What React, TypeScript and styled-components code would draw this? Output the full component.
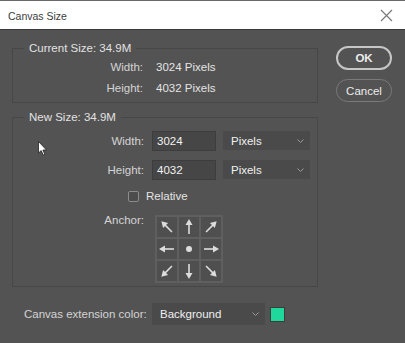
import React from 'react'
import styled, { createGlobalStyle } from 'styled-components'

const GlobalStyle = createGlobalStyle`
    html, body {
        margin: 0;
        padding: 0;
        background: #535353;
    }
    body {
        font-family: 'Liberation Sans', Arial, sans-serif;
    }
`

const Window = styled.div`
    position: relative;
    width: 405px;
    height: 343px;
    background: #535353;
    overflow: hidden;
    display: flex;
    flex-direction: column;
`

const TitleBar = styled.div`
    height: 28px;
    background: #ffffff;
    border-top: 1px solid #6a6a6a;
    border-bottom: 1px solid #3a3a3a;
    display: flex;
    align-items: center;
    justify-content: space-between;
    padding: 0 12px 0 8px;
`

const Title = styled.span`
    font-size: 10.5px;
    color: #3c3c3c;
    margin-top: 1px;
`

const Body = styled.div`
    flex: 1;
    display: flex;
    flex-direction: column;
    padding: 11px 0 0 12px;
`

const Main = styled.div`
    display: flex;
    align-items: flex-start;
`

const LeftColumn = styled.div`
    width: 306px;
    display: flex;
    flex-direction: column;
    gap: 7px;
`

const RightColumn = styled.div`
    margin-left: 18px;
    margin-top: 5px;
    display: flex;
    flex-direction: column;
    gap: 9px;
`

const Group = styled.fieldset<{ $pad: string }>`
    margin: 0;
    padding: ${(p) => p.$pad};
    border: 1px solid #474747;
    min-width: 0;
`

const Legend = styled.legend`
    margin-left: 11px;
    padding: 0 5px;
    font-size: 11.5px;
    line-height: 14px;
    color: #e2e2e2;
`

const InfoGrid = styled.div`
    display: grid;
    grid-template-columns: 130px auto;
    column-gap: 13px;
    grid-auto-rows: 21px;
    align-items: center;
`

const Label = styled.span`
    font-size: 11.5px;
    color: #d4d4d4;
    text-align: right;
    white-space: nowrap;
`

const Value = styled.span`
    font-size: 11.5px;
    color: #e4e4e4;
`

const FormGrid = styled.div`
    display: grid;
    grid-template-columns: 131px auto;
    column-gap: 8px;
    row-gap: 9px;
    align-items: center;
`

const FieldPair = styled.div`
    display: flex;
    gap: 7px;
`

const Input = styled.div`
    width: 64px;
    height: 20px;
    box-sizing: border-box;
    background: #464646;
    border: 1px solid #3d3d3d;
    display: flex;
    align-items: center;
    padding-left: 4px;
    font-size: 11.5px;
    color: #f2f2f2;
`

const Select = styled.div<{ $w: number; $h: number }>`
    width: ${(p) => p.$w}px;
    height: ${(p) => p.$h}px;
    box-sizing: border-box;
    background: #4a4a4a;
    display: flex;
    align-items: center;
    justify-content: space-between;
    padding: 0 6px 0 8px;
    font-size: 11.5px;
    color: #f0f0f0;
`

const CheckRow = styled.div`
    grid-column: 1 / span 2;
    display: flex;
    align-items: center;
    gap: 7px;
    padding-left: 115px;
    margin-top: 1px;
`

const CheckBox = styled.span`
    width: 11px;
    height: 11px;
    box-sizing: border-box;
    border: 1px solid #8c8c8c;
    border-radius: 2px;
    background: #4c4c4c;
`

const AnchorLabel = styled(Label)`
    align-self: start;
    margin-top: 3px;
`

const AnchorGrid = styled.div`
    margin-left: 3px;
    margin-top: 4px;
    display: grid;
    grid-template-columns: repeat(3, 22px);
    grid-template-rows: repeat(3, 22px);
    border: 1px solid #5f5f5f;
    width: fit-content;
`

const AnchorCell = styled.div`
    border: 1px solid #5f5f5f;
    background: #4f4f4f;
    display: flex;
    align-items: center;
    justify-content: center;
`

const PillButton = styled.div<{ $primary?: boolean }>`
    width: 56px;
    height: ${(p) => (p.$primary ? 24 : 23)}px;
    box-sizing: border-box;
    border-radius: 12px;
    border: ${(p) => (p.$primary ? '2px solid #c6c6c6' : '1px solid #7a7a7a')};
    display: flex;
    align-items: center;
    justify-content: center;
    font-size: 11.5px;
    font-weight: ${(p) => (p.$primary ? 'bold' : 'normal')};
    color: #ececec;
`

const Footer = styled.div`
    display: flex;
    align-items: center;
    margin-top: 16px;
    padding-left: 12px;
`

const FooterLabel = styled.span`
    font-size: 11.5px;
    color: #d4d4d4;
    width: 128px;
    white-space: nowrap;
`

const Swatch = styled.span`
    width: 15px;
    height: 15px;
    margin-left: 5px;
    background: #1fd89c;
    border: 1px solid #3d3d3d;
    box-sizing: border-box;
`

const Cursor = styled.svg`
    position: absolute;
    left: 38px;
    top: 141px;
`

const Chevron = () => (
    <svg width="7" height="4" viewBox="0 0 7 4">
        <path d="M0.5 0.5 L3.5 3.5 L6.5 0.5" fill="none" stroke="#9a9a9a" strokeWidth="1" />
    </svg>
)

const CloseIcon = () => (
    <svg width="13" height="13" viewBox="0 0 13 13">
        <path d="M1 1 L12 12 M12 1 L1 12" stroke="#7a7a7a" strokeWidth="1.2" />
    </svg>
)

// angle in degrees, 0 = pointing up
const Arrow = ({ angle }: { angle: number }) => (
    <svg width="18" height="18" viewBox="0 0 18 18">
        <g transform={`rotate(${angle} 9 9)`}>
            <line x1="9" y1="16" x2="9" y2="5" stroke="#dcdcdc" strokeWidth="1.6" />
            <path d="M9 1 L12.5 7 L5.5 7 Z" fill="#dcdcdc" />
        </g>
    </svg>
)

const Dot = () => (
    <svg width="18" height="18" viewBox="0 0 18 18">
        <circle cx="9" cy="9" r="3" fill="#dcdcdc" />
    </svg>
)

const anchorAngles = [-45, 0, 45, -90, null, 90, -135, 180, 135]

const App = () => {
    return (
        <Window>
            <GlobalStyle />
            <TitleBar>
                <Title>Canvas Size</Title>
                <CloseIcon />
            </TitleBar>
            <Body>
                <Main>
                    <LeftColumn>
                        <Group $pad="1px 0 4px 0">
                            <Legend>Current Size: 34.9M</Legend>
                            <InfoGrid>
                                <Label>Width:</Label>
                                <Value>3024 Pixels</Value>
                                <Label>Height:</Label>
                                <Value>4032 Pixels</Value>
                            </InfoGrid>
                        </Group>
                        <Group $pad="7px 0 3px 0">
                            <Legend>New Size: 34.9M</Legend>
                            <FormGrid>
                                <Label>Width:</Label>
                                <FieldPair>
                                    <Input>3024</Input>
                                    <Select $w={87} $h={19}>
                                        Pixels
                                        <Chevron />
                                    </Select>
                                </FieldPair>
                                <Label>Height:</Label>
                                <FieldPair>
                                    <Input>4032</Input>
                                    <Select $w={87} $h={19}>
                                        Pixels
                                        <Chevron />
                                    </Select>
                                </FieldPair>
                                <CheckRow>
                                    <CheckBox />
                                    <Value>Relative</Value>
                                </CheckRow>
                                <AnchorLabel>Anchor:</AnchorLabel>
                                <AnchorGrid>
                                    {anchorAngles.map((a, i) => (
                                        <AnchorCell key={i}>
                                            {a === null ? <Dot /> : <Arrow angle={a} />}
                                        </AnchorCell>
                                    ))}
                                </AnchorGrid>
                            </FormGrid>
                        </Group>
                    </LeftColumn>
                    <RightColumn>
                        <PillButton $primary>OK</PillButton>
                        <PillButton>Cancel</PillButton>
                    </RightColumn>
                </Main>
                <Footer>
                    <FooterLabel>Canvas extension color:</FooterLabel>
                    <Select $w={113} $h={22}>
                        Background
                        <Chevron />
                    </Select>
                    <Swatch />
                </Footer>
            </Body>
            <Cursor width="10" height="16" viewBox="0 0 10 16">
                <path d="M0.5 0.5 L0.5 12 L3.2 9.6 L5.2 14 L6.8 13.3 L4.9 9 L8.5 9 Z" fill="#ffffff" stroke="#222" strokeWidth="0.8" />
            </Cursor>
        </Window>
    )
}

export default App
